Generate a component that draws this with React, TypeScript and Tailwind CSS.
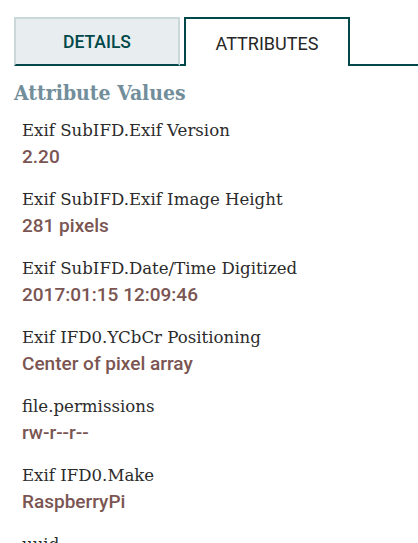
import React from "react";

const rows: [string, string][] = [
  ["Exif SubIFD.Exif Version", "2.20"],
  ["Exif SubIFD.Exif Image Height", "281 pixels"],
  ["Exif SubIFD.Date/Time Digitized", "2017:01:15 12:09:46"],
  ["Exif IFD0.YCbCr Positioning", "Center of pixel array"],
  ["file.permissions", "rw-r--r--"],
  ["Exif IFD0.Make", "RaspberryPi"],
  ["uuid", "c1a0b6e2-5f3d-4a8e-9b71-2d4f6e8a0c13"],
];

export default function App() {
  return (
    <div className="w-[418px] h-[543px] overflow-hidden bg-white pl-[14px] pt-[17px]">
      <div className="flex h-[49px]">
        <div className="w-[166px] h-full flex items-center justify-center bg-[#e8edef] border-t-2 border-l-2 border-r-2 border-t-[#cbd8da] border-l-[#cbd8da] border-r-[#cbd8da] border-b-2 border-b-[#004849] text-[#004849] text-[17.5px] font-medium font-['Roboto',sans-serif] pt-[1px]">
          DETAILS
        </div>
        <div className="w-[4px] h-full border-b-2 border-[#004849]" />
        <div className="w-[166px] h-full flex items-center justify-center border-t-2 border-l-2 border-r-2 border-[#004849] bg-white text-[#262626] text-[18px] font-['Roboto',sans-serif] pt-[1px]">
          ATTRIBUTES
        </div>
        <div className="flex-1 h-full border-b-2 border-[#004849]" />
      </div>
      <div className="mt-[13px] h-[28px] leading-[28px] text-[21px] font-bold text-[#728e9b] font-['DejaVu_Serif_Condensed','DejaVu_Serif',serif]">
        Attribute Values
      </div>
      <div className="mt-[11px] pl-[8px] flex flex-col gap-[17px]">
        {rows.map(([k, v]) => (
          <div key={k} className="flex flex-col">
            <div className="h-[26px] leading-[26px] text-[16.6px] text-[#2b2b2b] font-['DejaVu_Serif',serif] whitespace-nowrap">
              {k}
            </div>
            <div className="h-[26px] leading-[26px] text-[19px] font-medium text-[#7a5552] font-['Roboto',sans-serif] whitespace-nowrap">
              {v}
            </div>
          </div>
        ))}
      </div>
    </div>
  );
}
